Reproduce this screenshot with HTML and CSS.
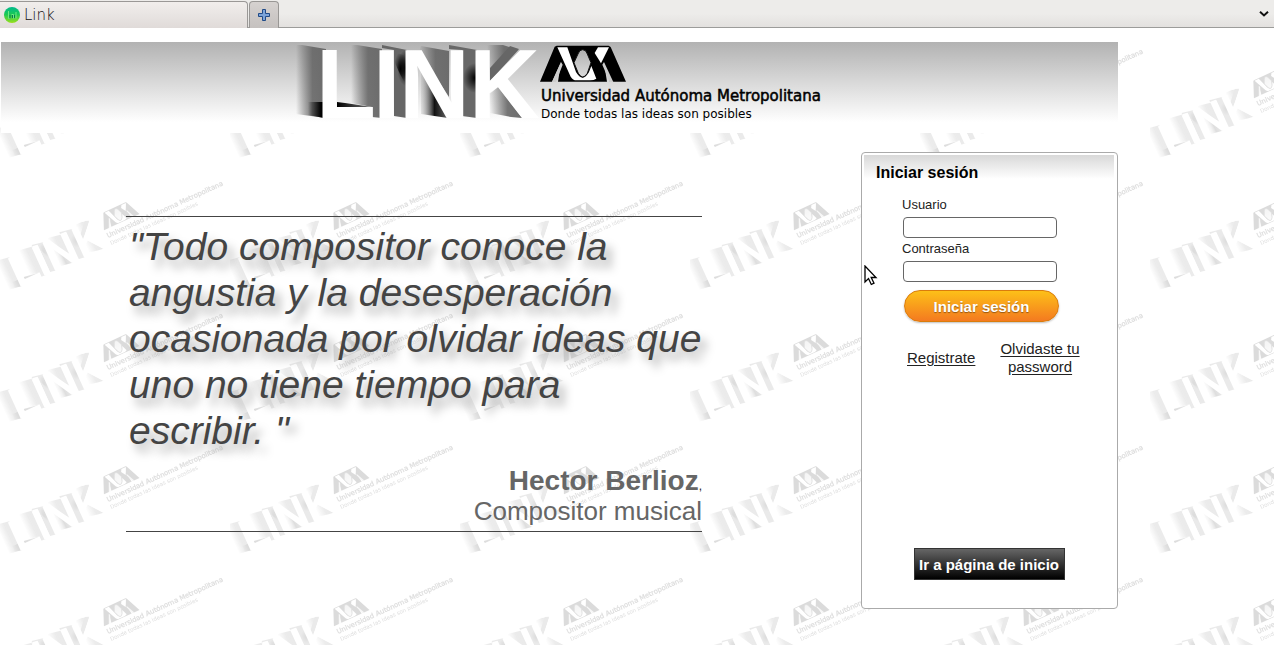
FILE: index.html
```html
<!DOCTYPE html>
<html lang="es">
<head>
<meta charset="utf-8">
<title>Link</title>
<link rel="stylesheet" href="styles.css">
</head>
<body>
<div class="tabbar">
  <button class="tab" type="button">
    <svg class="favicon" width="16" height="16" viewBox="0 0 16 16" aria-hidden="true">
      <defs><linearGradient id="fav" x1="0" y1="0" x2="0" y2="1"><stop offset="0" stop-color="#00b98c"/><stop offset=".45" stop-color="#19c956"/><stop offset="1" stop-color="#9be01c"/></linearGradient></defs>
      <circle cx="8" cy="8" r="8" fill="url(#fav)"/>
      <path d="M4.500 4v7.500h2M7.500 7.500h2v4M12 5v6.500" fill="none" stroke="#6fe884" stroke-width="1"/>
      <path d="M6 8v3.500M8.500 8v3M10.500 8v3" stroke="#087b4c" stroke-width="1"/>
    </svg>
    <span>Link</span>
  </button>
  <button class="tab-add" type="button" aria-label="Nueva pestaña">
    <svg width="12" height="12" viewBox="0 0 12 12" aria-hidden="true"><path d="M4.500 .5h3v4h4v3h-4v4h-3v-4h-4v-3h4z" fill="#7ba3d8" stroke="#204a87" stroke-linejoin="round"/></svg>
  </button>
  <button class="tab-list" type="button" aria-label="Lista de pestañas">
    <svg width="10" height="6" viewBox="0 0 10 6" aria-hidden="true"><path d="M1 .8l4 3.700 4-3.700" fill="none" stroke="#111" stroke-width="2"/></svg>
  </button>
</div>

<div class="page">
  <svg class="watermark" aria-hidden="true">
    <defs>
      <pattern id="tile" width="230" height="132" patternUnits="userSpaceOnUse">
        <g transform="translate(108 78) rotate(-24.600) scale(.455) translate(-541 -101)" opacity=".14"><use href="#brand"/></g>
      </pattern>
    </defs>
    <rect width="100%" height="100%" fill="url(#tile)"/>
  </svg>

  <div class="container">
    <header class="banner">
      <svg class="logo" viewBox="294 42 532 91" role="img" aria-label="LINK, Universidad Autónoma Metropolitana">
        <defs>
          <linearGradient id="fade"><stop offset="0" stop-color="#555" stop-opacity="0"/><stop offset=".55" stop-color="#666" stop-opacity=".9"/><stop offset="1" stop-color="#6c6c6c"/></linearGradient>
          <linearGradient id="foot"><stop offset="0" stop-color="#000" stop-opacity="0"/><stop offset=".8" stop-color="#000"/></linearGradient>
          <linearGradient id="ledge"><stop offset="0" stop-color="#000"/><stop offset="1" stop-color="#777"/></linearGradient>
          <radialGradient id="dark"><stop offset="0" stop-color="#000"/><stop offset="1" stop-color="#000" stop-opacity="0"/></radialGradient>
          <linearGradient id="inner"><stop offset="0" stop-color="#999" stop-opacity=".2"/><stop offset=".5" stop-color="#111"/><stop offset="1" stop-color="#666"/></linearGradient>
          <linearGradient id="hole" x1="0" y1="0" x2="0" y2="1"><stop offset="0" stop-color="#b0b0b0"/><stop offset="1" stop-color="#dcdcdc"/></linearGradient>
          <g id="brand">
            <path d="M296 45h6l24 4v69l-30-4z" fill="url(#fade)"/>
            <path d="M308 102h16v16l-16-3z" fill="url(#foot)"/>
            <path d="M351 45h6l25 4v69l-10-1v-10l-21-4z" fill="url(#fade)"/>
            <path d="M337 102l8 1 27 4v1h-35z" fill="url(#ledge)"/>
            <path d="M382 45l25 5v68l-13-2V50l-12-2z" fill="#666"/>
            <path d="M394 52l13 4v30q-8-12-13-26z" fill="url(#dark)"/>
            <ellipse cx="406" cy="68" rx="9" ry="18" fill="url(#dark)"/>
            <path d="M421 46l28 5v46l-30-46z" fill="url(#fade)"/>
            <path d="M421 71l27 45v2l-27-4z" fill="url(#inner)"/>
            <path d="M449 45l28 5v68l-15-2V50l-13-1z" fill="#686868"/>
            <ellipse cx="475" cy="78" rx="12" ry="15" fill="url(#dark)"/>
            <path d="M487 45h16l15 5-28 31z" fill="url(#fade)"/>
            <path d="M490 68l20-22 9 3-29 32z" fill="#666"/>
            <path d="M490 94l8-7 24 31-11-1-21-4z" fill="url(#fade)"/>
            <text class="logo-word" x="316 373 399 469" y="118">LINK</text>
            <g transform="translate(530 36) scale(.3333)">
              <path d="M30 137L74 32L80 29H236L242 33L288 137H240L222 80L231 137H84L93 78L66 137Z"/>
              <path d="M93 78L66 138H78L98 86ZM222 78L250 138H239L217 86Z" fill="#ccc"/>
              <path d="M82 34H112L138 108Q158 142 177 108L184 90L199 128Q192 133 180 133H140Q128 133 122 122Z" fill="#fff"/>
              <path d="M204 34H237L213 82L194 51Z" fill="#fff"/>
              <path d="M158 41Q168 41 172 54L183 80L172 112Q158 134 145 112L132 80L144 54Q148 41 158 41Z" fill="url(#hole)" stroke="#111" stroke-width="3"/>
            </g>
            <text class="logo-name" x="541" y="101">Universidad Autónoma Metropolitana</text>
            <text class="logo-motto" x="541" y="118">Donde todas las ideas son posibles</text>
          </g>
        </defs>
        <use href="#brand"/>
      </svg>
    </header>

    <main class="content">
      <section class="quote">
        <blockquote class="quote-text">"Todo compositor conoce la angustia y la desesperación ocasionada por olvidar ideas que uno no tiene tiempo para escribir. "</blockquote>
        <p class="quote-author"><strong>Hector Berlioz</strong><span class="comma">,</span><br>Compositor musical</p>
      </section>

      <aside class="login">
        <h1 class="login-title">Iniciar sesión</h1>
        <form class="login-form">
          <label for="user">Usuario</label>
          <input id="user" type="text">
          <label for="pass">Contraseña</label>
          <input id="pass" type="password">
          <button class="submit" type="button">Iniciar sesión</button>
        </form>
        <nav class="login-links">
          <a href="#registro">Registrate</a>
          <a class="forgot" href="#password">Olvidaste tu password</a>
        </nav>
        <button class="home" type="button">Ir a página de inicio</button>
        <svg class="cursor" width="14" height="21" viewBox="0 0 14 21" aria-hidden="true"><path d="M1 1v16l3.500-3.500L7.300 19.500l2.700-1.300-2.800-5.700H12z" fill="#fff" stroke="#000" stroke-width="1.300"/></svg>
      </aside>
    </main>
  </div>
</div>
</body>
</html>
```
FILE: styles.css
```css
* { box-sizing: border-box; }

body {
  margin: 0;
  min-height: 100vh;
  display: flex;
  flex-direction: column;
  background: #fff;
  font-family: "Liberation Sans", Arial, sans-serif;
  overflow: hidden;
}

button { font-family: inherit; cursor: pointer; }

.tabbar {
  display: flex;
  align-items: flex-end;
  gap: 1px;
  height: 28px;
  background: linear-gradient(#edecea 50%, #e3e1df);
  border-bottom: 1px solid #9c9c9a;
}

.tab {
  display: flex;
  align-items: center;
  gap: 4px;
  width: 248px;
  height: 27px;
  margin-bottom: -1px;
  padding: 0 4px;
  border: 1px solid #9a9896;
  border-width: 1px 1px 0 0;
  border-top-right-radius: 4px;
  background: linear-gradient(#f1eeec, #e0dbd9);
  color: #111;
  font: 200 15px "DejaVu Sans Light", "DejaVu Sans", sans-serif;
}

.tab-add {
  display: flex;
  align-items: center;
  justify-content: center;
  width: 30px;
  height: 27px;
  margin-bottom: -1px;
  padding: 0;
  border: 1px solid #999795;
  border-bottom: 0;
  border-radius: 4px 4px 0 0;
  background: linear-gradient(#d6d2d0, #c5c1bf);
}

.tab-list {
  display: flex;
  align-items: center;
  margin-left: auto;
  height: 27px;
  padding: 0 5px;
  border: 0;
  background: none;
}

.page {
  position: relative;
  flex: 1;
  padding-top: 14px;
}

.watermark {
  position: absolute;
  inset: 0;
  width: 100%;
  height: 100%;
}

.container {
  position: relative;
  max-width: 1118px;
  padding-left: 1px;
}

.banner {
  display: flex;
  justify-content: center;
  background: linear-gradient(#b2b2b2, #fff 88%);
}

.logo { width: 532px; height: 91px; }

.logo-word {
  font: bold 98px "Liberation Sans", Arial, sans-serif;
  fill: #fff;
}

.logo-name {
  font: 15px "DejaVu Sans", sans-serif;
  fill: #000;
  stroke: #000;
  stroke-width: .5px;
}

.logo-motto {
  font: 12px "DejaVu Sans", sans-serif;
  fill: #000;
}

.content {
  display: flex;
  justify-content: space-between;
  align-items: flex-start;
  padding-top: 19px;
}

.quote {
  width: 576px;
  margin: 64px 0 0 125px;
  padding: 7px 0 5px 3px;
  border: solid #444;
  border-width: 1px 0;
}

.quote-text {
  margin: 0;
  color: #444;
  font-size: 39px;
  font-style: italic;
  line-height: 46px;
  text-shadow: 6px 8px 10px #aaa;
}

.quote-author {
  margin: 12px 0 0;
  color: #666;
  font-size: 26px;
  line-height: 30px;
  text-align: right;
}

.quote-author strong {
  font-size: 28px;
  line-height: 28px;
}

.comma {
  color: #222;
  font-size: 12px;
  line-height: 12px;
}

.login {
  position: relative;
  display: flex;
  flex-direction: column;
  width: 257px;
  min-height: 457px;
  padding: 2px 3px 28px 2px;
  border: 1px solid #aaa;
  border-radius: 4px;
  background: #fff;
}

.login-title {
  margin: 0;
  padding: 8px 12px 0;
  font-size: 16px;
  line-height: 20px;
  background: linear-gradient(#d8d8d8, #fff 24px);
}

.login-form {
  display: flex;
  flex-direction: column;
  align-items: flex-start;
  padding: 12px 38px 0;
}

.login-form label {
  color: #222;
  font-size: 13px;
  line-height: 20px;
}

.login-form input {
  width: 154px;
  height: 21px;
  margin: 2px 0 1px 1px;
  border: 1px solid #666;
  border-radius: 4px;
  background: #fff;
}

.submit {
  width: 155px;
  height: 32px;
  margin: 7px 0 0 2px;
  border: 1px solid #da7c0c;
  border-radius: 16px;
  background: linear-gradient(#fdc018, #f47a20);
  box-shadow: 0 1px 2px rgba(0, 0, 0, .25);
  color: #fff;
  font-size: 15px;
  font-weight: bold;
  text-shadow: 0 1px 1px rgba(0, 0, 0, .4);
}

.login-links {
  display: flex;
  align-items: center;
  justify-content: space-between;
  padding: 18px 31px 0 43px;
  font-size: 15px;
  line-height: 18px;
  text-align: center;
}

.login-links a {
  color: #222;
  text-underline-offset: 2px;
}

.forgot { width: 86px; }

.home {
  align-self: center;
  width: 151px;
  height: 32px;
  margin-top: auto;
  padding: 0;
  border: 1px solid #333;
  background: linear-gradient(#666, #000);
  color: #fff;
  font-size: 15px;
  font-weight: bold;
}

.cursor {
  position: absolute;
  left: 2px;
  top: 112px;
}
```
